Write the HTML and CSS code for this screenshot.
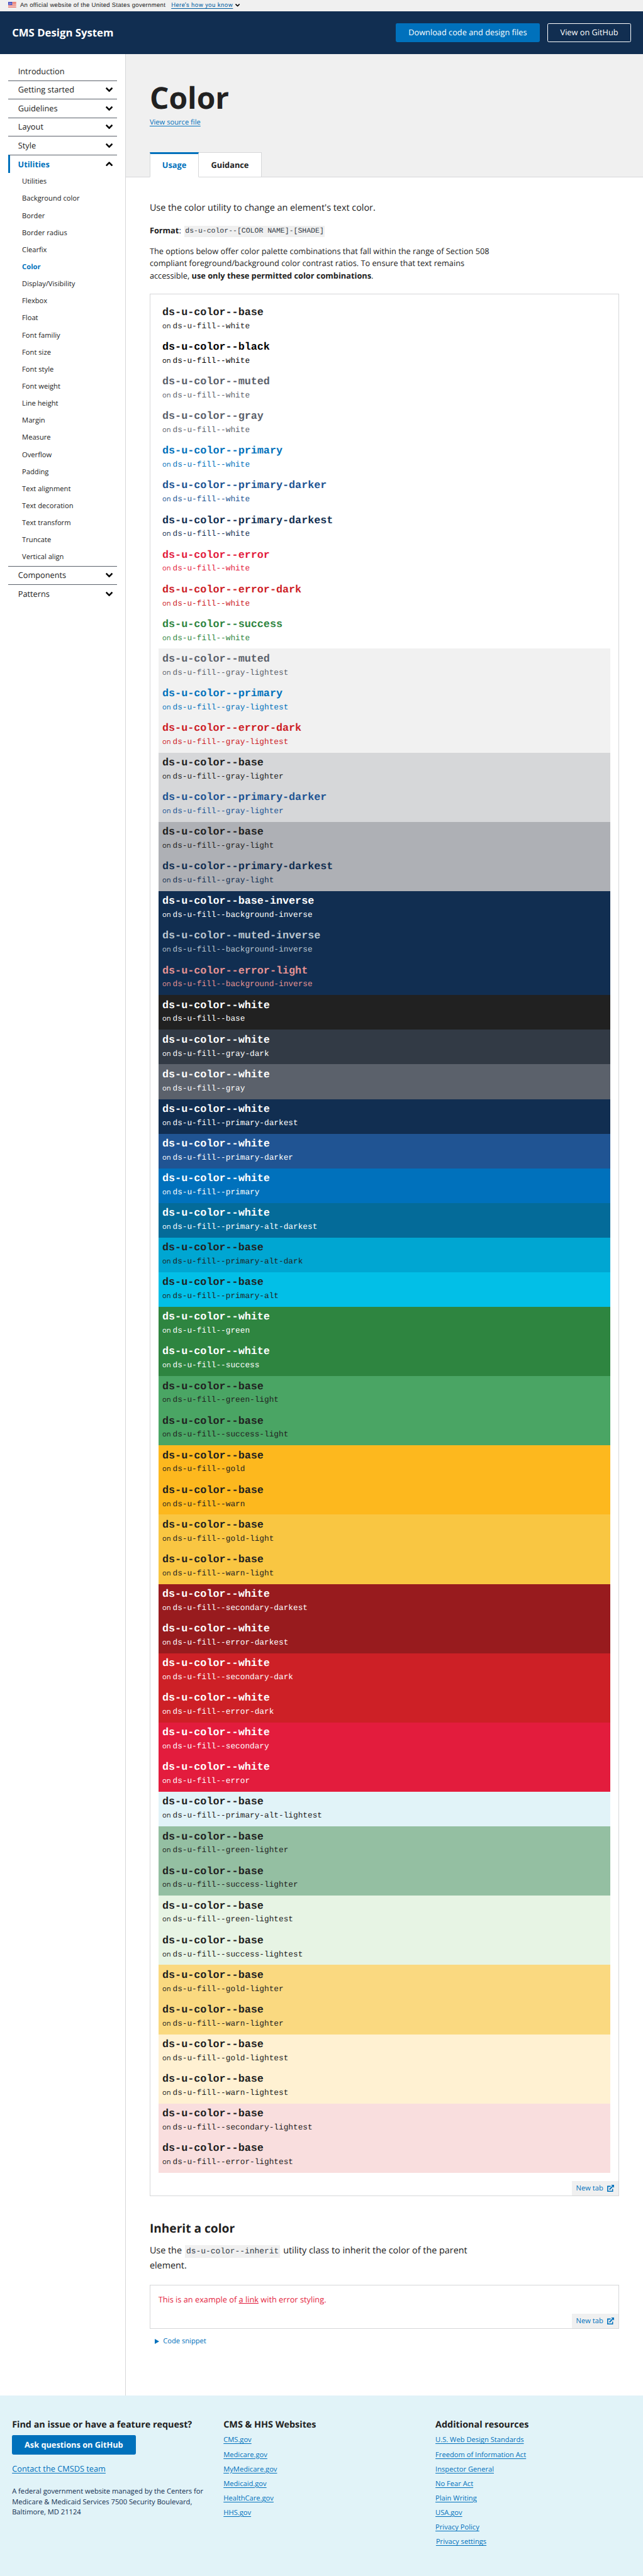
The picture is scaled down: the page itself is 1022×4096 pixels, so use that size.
FILE: index.html
```html
<!DOCTYPE html>
<html lang="en">
<head>
<meta charset="utf-8">
<title>Color - CMS Design System</title>
<link rel="stylesheet" href="styles.css">
</head>
<body>
<svg width="0" height="0" class="defs">
  <symbol id="chev" viewBox="0 0 14 9"><path d="M2 2l5 5 5-5" fill="none" stroke="#000" stroke-width="3.2" stroke-linecap="square" stroke-linejoin="miter"/></symbol>
  <symbol id="ext" viewBox="0 0 14 14"><path d="M7 3H1.1v9.9h9.8V8" fill="none" stroke="#0071bc" stroke-width="2"/><path d="M4.6 9.4L11 3" fill="none" stroke="#0071bc" stroke-width="2.4"/><path d="M7.8 0H14v6.2z" fill="#0071bc"/></symbol>
</svg>
<div class="page">
  <div class="banner">
    <svg class="flag" viewBox="0 0 16 11"><path fill="#fff" d="M0 0h16v11H0z"/><path fill="#dd3d2b" d="M8 0h8v1H8zM8 2h8v1H8zM8 4h8v1H8zM0 6h16v1H0zM0 8h16v1H0zM0 10h16v1H0z"/><path fill="#2a36b8" d="M0 0h8v6.2H0z"/><path fill="#fff" d="M1 1h1v1H1zM3 1h1v1H3zM5 1h1v1H5zM2 2.6h1v1H2zM4 2.6h1v1H4zM6 2.6h1v1H6zM1 4.2h1v1H1zM3 4.2h1v1H3zM5 4.2h1v1H5z"/></svg>
    <span class="banner-text">An official website of the United States government</span>
    <a class="banner-link">Here’s how you know</a>
    <svg class="banner-chev"><use href="#chev"/></svg>
  </div>
  <header class="top">
    <span class="brand">CMS Design System</span>
    <a class="btn btn-fill">Download code and design files</a>
    <a class="btn btn-line">View on GitHub</a>
  </header>
  <div class="body">
    <nav class="side">
      <div class="item first">Introduction</div>
      <div class="item">Getting started<svg><use href="#chev"/></svg></div>
      <div class="item">Guidelines<svg><use href="#chev"/></svg></div>
      <div class="item">Layout<svg><use href="#chev"/></svg></div>
      <div class="item">Style<svg><use href="#chev"/></svg></div>
      <div class="item open">Utilities<svg><use href="#chev"/></svg></div>
      <ul class="sub">
        <li>Utilities</li><li>Background color</li><li>Border</li><li>Border radius</li><li>Clearfix</li><li class="current">Color</li><li>Display/Visibility</li><li>Flexbox</li><li>Float</li><li>Font familiy</li><li>Font size</li><li>Font style</li><li>Font weight</li><li>Line height</li><li>Margin</li><li>Measure</li><li>Overflow</li><li>Padding</li><li>Text alignment</li><li>Text decoration</li><li>Text transform</li><li>Truncate</li><li>Vertical align</li>
      </ul>
      <div class="item">Components<svg><use href="#chev"/></svg></div>
      <div class="item">Patterns<svg><use href="#chev"/></svg></div>
    </nav>
    <main class="main">
      <div class="hero">
        <h1>Color</h1>
        <a class="source">View source file</a>
        <div class="tabs"><span class="tab active">Usage</span><span class="tab">Guidance</span></div>
      </div>
      <div class="content">
        <p class="lead">Use the color utility to change an element's text color.</p>
        <p class="text format"><b>Format</b>: <code class="code">ds-u-color--[COLOR NAME]-[SHADE]</code></p>
        <p class="text">The options below offer color palette combinations that fall within the range of Section 508<br>compliant foreground/background color contrast ratios. To ensure that text remains<br>accessible, <b>use only these permitted color combinations</b>.</p>
        <section class="example palette">
          <div class="rows">
            <div class="row base white-bg"><h3>ds-u-color--base</h3><p>on <code>ds-u-fill--white</code></p></div>
            <div class="row black white-bg"><h3>ds-u-color--black</h3><p>on <code>ds-u-fill--white</code></p></div>
            <div class="row muted white-bg"><h3>ds-u-color--muted</h3><p>on <code>ds-u-fill--white</code></p></div>
            <div class="row muted white-bg"><h3>ds-u-color--gray</h3><p>on <code>ds-u-fill--white</code></p></div>
            <div class="row primary white-bg"><h3>ds-u-color--primary</h3><p>on <code>ds-u-fill--white</code></p></div>
            <div class="row darker white-bg"><h3>ds-u-color--primary-darker</h3><p>on <code>ds-u-fill--white</code></p></div>
            <div class="row darkest white-bg"><h3>ds-u-color--primary-darkest</h3><p>on <code>ds-u-fill--white</code></p></div>
            <div class="row error white-bg"><h3>ds-u-color--error</h3><p>on <code>ds-u-fill--white</code></p></div>
            <div class="row error-dark white-bg"><h3>ds-u-color--error-dark</h3><p>on <code>ds-u-fill--white</code></p></div>
            <div class="row success white-bg"><h3>ds-u-color--success</h3><p>on <code>ds-u-fill--white</code></p></div>
            <div class="row muted gray-lightest-bg"><h3>ds-u-color--muted</h3><p>on <code>ds-u-fill--gray-lightest</code></p></div>
            <div class="row primary gray-lightest-bg"><h3>ds-u-color--primary</h3><p>on <code>ds-u-fill--gray-lightest</code></p></div>
            <div class="row error-dark gray-lightest-bg"><h3>ds-u-color--error-dark</h3><p>on <code>ds-u-fill--gray-lightest</code></p></div>
            <div class="row base gray-lighter-bg"><h3>ds-u-color--base</h3><p>on <code>ds-u-fill--gray-lighter</code></p></div>
            <div class="row darker gray-lighter-bg"><h3>ds-u-color--primary-darker</h3><p>on <code>ds-u-fill--gray-lighter</code></p></div>
            <div class="row base gray-light-bg"><h3>ds-u-color--base</h3><p>on <code>ds-u-fill--gray-light</code></p></div>
            <div class="row darkest gray-light-bg"><h3>ds-u-color--primary-darkest</h3><p>on <code>ds-u-fill--gray-light</code></p></div>
            <div class="row white inverse-bg"><h3>ds-u-color--base-inverse</h3><p>on <code>ds-u-fill--background-inverse</code></p></div>
            <div class="row muted-inverse inverse-bg"><h3>ds-u-color--muted-inverse</h3><p>on <code>ds-u-fill--background-inverse</code></p></div>
            <div class="row error-light inverse-bg"><h3>ds-u-color--error-light</h3><p>on <code>ds-u-fill--background-inverse</code></p></div>
            <div class="row white base-bg"><h3>ds-u-color--white</h3><p>on <code>ds-u-fill--base</code></p></div>
            <div class="row white gray-dark-bg"><h3>ds-u-color--white</h3><p>on <code>ds-u-fill--gray-dark</code></p></div>
            <div class="row white gray-bg"><h3>ds-u-color--white</h3><p>on <code>ds-u-fill--gray</code></p></div>
            <div class="row white inverse-bg"><h3>ds-u-color--white</h3><p>on <code>ds-u-fill--primary-darkest</code></p></div>
            <div class="row white darker-bg"><h3>ds-u-color--white</h3><p>on <code>ds-u-fill--primary-darker</code></p></div>
            <div class="row white primary-bg"><h3>ds-u-color--white</h3><p>on <code>ds-u-fill--primary</code></p></div>
            <div class="row white alt-darkest-bg"><h3>ds-u-color--white</h3><p>on <code>ds-u-fill--primary-alt-darkest</code></p></div>
            <div class="row base alt-dark-bg"><h3>ds-u-color--base</h3><p>on <code>ds-u-fill--primary-alt-dark</code></p></div>
            <div class="row base alt-bg"><h3>ds-u-color--base</h3><p>on <code>ds-u-fill--primary-alt</code></p></div>
            <div class="row white green-bg"><h3>ds-u-color--white</h3><p>on <code>ds-u-fill--green</code></p></div>
            <div class="row white green-bg"><h3>ds-u-color--white</h3><p>on <code>ds-u-fill--success</code></p></div>
            <div class="row base green-light-bg"><h3>ds-u-color--base</h3><p>on <code>ds-u-fill--green-light</code></p></div>
            <div class="row base green-light-bg"><h3>ds-u-color--base</h3><p>on <code>ds-u-fill--success-light</code></p></div>
            <div class="row base gold-bg"><h3>ds-u-color--base</h3><p>on <code>ds-u-fill--gold</code></p></div>
            <div class="row base gold-bg"><h3>ds-u-color--base</h3><p>on <code>ds-u-fill--warn</code></p></div>
            <div class="row base gold-light-bg"><h3>ds-u-color--base</h3><p>on <code>ds-u-fill--gold-light</code></p></div>
            <div class="row base gold-light-bg"><h3>ds-u-color--base</h3><p>on <code>ds-u-fill--warn-light</code></p></div>
            <div class="row white red-darkest-bg"><h3>ds-u-color--white</h3><p>on <code>ds-u-fill--secondary-darkest</code></p></div>
            <div class="row white red-darkest-bg"><h3>ds-u-color--white</h3><p>on <code>ds-u-fill--error-darkest</code></p></div>
            <div class="row white red-dark-bg"><h3>ds-u-color--white</h3><p>on <code>ds-u-fill--secondary-dark</code></p></div>
            <div class="row white red-dark-bg"><h3>ds-u-color--white</h3><p>on <code>ds-u-fill--error-dark</code></p></div>
            <div class="row white red-bg"><h3>ds-u-color--white</h3><p>on <code>ds-u-fill--secondary</code></p></div>
            <div class="row white red-bg"><h3>ds-u-color--white</h3><p>on <code>ds-u-fill--error</code></p></div>
            <div class="row base alt-lightest-bg"><h3>ds-u-color--base</h3><p>on <code>ds-u-fill--primary-alt-lightest</code></p></div>
            <div class="row base green-lighter-bg"><h3>ds-u-color--base</h3><p>on <code>ds-u-fill--green-lighter</code></p></div>
            <div class="row base green-lighter-bg"><h3>ds-u-color--base</h3><p>on <code>ds-u-fill--success-lighter</code></p></div>
            <div class="row base green-lightest-bg"><h3>ds-u-color--base</h3><p>on <code>ds-u-fill--green-lightest</code></p></div>
            <div class="row base green-lightest-bg"><h3>ds-u-color--base</h3><p>on <code>ds-u-fill--success-lightest</code></p></div>
            <div class="row base gold-lighter-bg"><h3>ds-u-color--base</h3><p>on <code>ds-u-fill--gold-lighter</code></p></div>
            <div class="row base gold-lighter-bg"><h3>ds-u-color--base</h3><p>on <code>ds-u-fill--warn-lighter</code></p></div>
            <div class="row base gold-lightest-bg"><h3>ds-u-color--base</h3><p>on <code>ds-u-fill--gold-lightest</code></p></div>
            <div class="row base gold-lightest-bg"><h3>ds-u-color--base</h3><p>on <code>ds-u-fill--warn-lightest</code></p></div>
            <div class="row base red-lightest-bg"><h3>ds-u-color--base</h3><p>on <code>ds-u-fill--secondary-lightest</code></p></div>
            <div class="row base red-lightest-bg"><h3>ds-u-color--base</h3><p>on <code>ds-u-fill--error-lightest</code></p></div>
          </div>
          <a class="newtab">New tab<svg><use href="#ext"/></svg></a>
        </section>
        <h2>Inherit a color</h2>
        <p class="lead inherit">Use the <code class="code">ds-u-color--inherit</code> utility class to inherit the color of the parent<br>element.</p>
        <section class="example small">
          <p class="error">This is an example of <u>a link</u> with error styling.</p>
          <a class="newtab">New tab<svg><use href="#ext"/></svg></a>
        </section>
        <div class="snippet"><i></i>Code snippet</div>
      </div>
    </main>
  </div>
  <footer class="footer">
    <div class="col">
      <h4>Find an issue or have a feature request?</h4>
      <a class="btn btn-fill ask">Ask questions on GitHub</a>
      <a class="contact">Contact the CMSDS team</a>
      <p>A federal government website managed by the Centers for<br>Medicare &amp; Medicaid Services 7500 Security Boulevard,<br>Baltimore, MD 21124</p>
    </div>
    <div class="col links">
      <h4>CMS &amp; HHS Websites</h4>
      <a>CMS.gov</a><a>Medicare.gov</a><a>MyMedicare.gov</a><a>Medicaid.gov</a><a>HealthCare.gov</a><a>HHS.gov</a>
    </div>
    <div class="col links">
      <h4>Additional resources</h4>
      <a>U.S. Web Design Standards</a><a>Freedom of Information Act</a><a>Inspector General</a><a>No Fear Act</a><a>Plain Writing</a><a>USA.gov</a><a>Privacy Policy</a><a class="settings">Privacy settings</a>
    </div>
  </footer>
</div>
</body>
</html>
```

FILE: styles.css
```css
* { box-sizing: border-box; margin: 0; padding: 0; }
html { height: 4096px; overflow: hidden; }
body { height: 4096px; overflow: hidden; background: #e1f3f8; }
.defs { display: block; }
.page {
  zoom: 0.79828;
  background: #fff;
  color: #212121;
  font: 16px/24px "Open Sans", sans-serif;
  text-rendering: geometricPrecision;
  white-space: nowrap;
}

/* Government banner */
.banner { height: 22px; display: flex; align-items: center; padding-left: 16px; background: #f0f0f0; font: 12px/22px "Liberation Sans", sans-serif; }
.flag { flex: none; width: 16px; height: 11px; margin: -3px 8px 0 0; }
.banner-text { width: 293px; letter-spacing: 0.37px; color: #1b1b1b; }
.banner-link { width: 126px; margin-left: 8px; font-family: Roboto, sans-serif; letter-spacing: 0.6px; color: #005ea2; text-decoration: underline; text-underline-offset: 2px; }
.banner-chev { width: 9px; height: 6px; margin-left: 2px; }

/* Site header */
.top { height: 86px; display: flex; align-items: center; padding: 0 24px; background: #112e51; color: #fff; }
.brand { flex: 1; font-size: 21px; font-weight: 700; }
.btn { display: flex; align-items: center; justify-content: center; height: 38px; border-radius: 3px; color: #fff; }
.btn-fill { width: 286px; background: #0071bc; }
.btn-line { width: 166px; margin-left: 16px; border: 1px solid #fff; }

.body { display: flex; height: 4663px; }

/* Sidebar */
.side { width: 250px; padding: 16px 16px 0; border-right: 1px solid #d6d7d9; }
.item { height: 37px; display: flex; align-items: center; justify-content: space-between; padding: 0 8px 0 20px; border-top: 1px solid #5b616b; }
.item.first { border-top: 0; height: 36px; }
.item svg { width: 14px; height: 9px; }
.item.open { padding-left: 16px; border-left: 4px solid #0071bc; color: #0071bc; font-weight: 700; }
.open svg { transform: rotate(180deg); }
.sub { list-style: none; }
.sub li { height: 34px; padding-left: 28px; font-size: 14px; line-height: 34px; }
.current { color: #0071bc; font-weight: 700; }

/* Page heading and tabs */
.main { flex: 1; }
.hero { height: 245px; padding-left: 48px; background: #f0f0f0; border-bottom: 1px solid #d6d7d9; display: flex; flex-direction: column; }
h1 { margin-top: 47px; font-size: 60px; line-height: 80px; }
.source { margin-top: -1px; font-size: 14px; line-height: 21px; }
a { color: #0071bc; }
.source, .contact, .links a { text-decoration: underline; text-underline-offset: 2px; align-self: flex-start; }
.tabs { display: flex; margin: auto 0 -1px; }
.tab { height: 50px; width: 125px; display: flex; align-items: center; justify-content: center; padding-top: 3px; background: #fff; border: 1px solid #d6d7d9; border-left: 0; font-weight: 700; }
.tab.active { width: 98px; padding-top: 0; color: #0071bc; border-left: 1px solid #d6d7d9; border-top: 4px solid #0071bc; border-bottom-color: #fff; }

/* Content */
.content { padding: 47px 48px 0; }
.lead { font-size: 18px; line-height: 29px; }
.code { padding: 3px 2px; margin: 0 2px; background: #f0f0f0; color: #323a45; font: 0.9em/1 "Liberation Mono", monospace; }
.format { margin: 18px 0; }
.example { display: flex; flex-direction: column; border: 1px solid #d6d7d9; }
.palette { height: 3790px; margin-top: 24px; padding-top: 16px; }
.rows { padding: 0 16px; }
.row { height: 69px; padding: 8px; }
.row h3 { font: 700 21px/27.3px "Liberation Mono", monospace; }
.row p { font-size: 14px; line-height: 24.6px; }
.row code { font: 16px/24.6px "Liberation Mono", monospace; }
.newtab { align-self: flex-end; margin-top: auto; width: 92px; height: 29px; display: flex; align-items: center; justify-content: center; gap: 8px; background: #f0f0f0; font-size: 14px; }
.newtab svg { width: 14px; height: 14px; }
h2 { margin-top: 47px; font-size: 24px; line-height: 33px; }
.inherit { margin-top: 14px; }
.small { height: 88px; margin-top: 24px; padding-top: 16px; }
.small p { padding-left: 16px; }
.snippet { display: flex; align-items: center; margin: 15px 0 0 10px; font-size: 14px; line-height: 21px; color: #0071bc; }
.snippet i { margin-right: 8px; border-left: 10px solid #0071bc; border-top: 6px solid transparent; border-bottom: 6px solid transparent; }

/* Text colors */
.base { color: #212121; }
.black { color: #000; }
.white { color: #fff; }
.muted { color: #5b616b; }
.primary { color: #0071bc; }
.darker { color: #205493; }
.darkest { color: #112e51; }
.error { color: #e31c3d; }
.error-dark { color: #cd2026; }
.error-light { color: #e59393; }
.success { color: #2e8540; }
.muted-inverse { color: #bac5cf; }

/* Fills */
.white-bg { background: #fff; }
.gray-lightest-bg { background: #f1f1f1; }
.gray-lighter-bg { background: #d6d7d9; }
.gray-light-bg { background: #aeb0b5; }
.gray-bg { background: #5b616b; }
.gray-dark-bg { background: #323a45; }
.base-bg { background: #212121; }
.inverse-bg { background: #112e51; }
.darker-bg { background: #205493; }
.primary-bg { background: #0071bc; }
.alt-darkest-bg { background: #046b99; }
.alt-dark-bg { background: #00a6d2; }
.alt-bg { background: #02bfe7; }
.alt-lightest-bg { background: #e1f3f8; }
.green-bg { background: #2e8540; }
.green-light-bg { background: #4aa564; }
.green-lighter-bg { background: #94bfa2; }
.green-lightest-bg { background: #e7f4e4; }
.gold-bg { background: #fdb81e; }
.gold-light-bg { background: #f9c642; }
.gold-lighter-bg { background: #fad980; }
.gold-lightest-bg { background: #fff1d2; }
.red-darkest-bg { background: #981b1e; }
.red-dark-bg { background: #cd2026; }
.red-bg { background: #e31c3d; }
.red-lightest-bg { background: #f9dede; }

/* Footer */
.footer { height: 360px; display: grid; grid-template-columns: 421px 422px 1fr; padding: 47px 0 0 24px; background: #e1f3f8; }
.col { display: flex; flex-direction: column; align-items: flex-start; }
.col h4 { font-size: 18px; line-height: 24px; }
.ask { width: 246px; margin-top: 9px; font-weight: 700; }
.contact { margin-top: 16px; }
.col p { margin-top: 24px; font-size: 14px; line-height: 21px; color: #112e51; }
.links h4 { margin-bottom: 9px; }
.links a { font-size: 14px; line-height: 21px; margin-bottom: 8px; }
.links .settings { margin-left: 1px; }
```
